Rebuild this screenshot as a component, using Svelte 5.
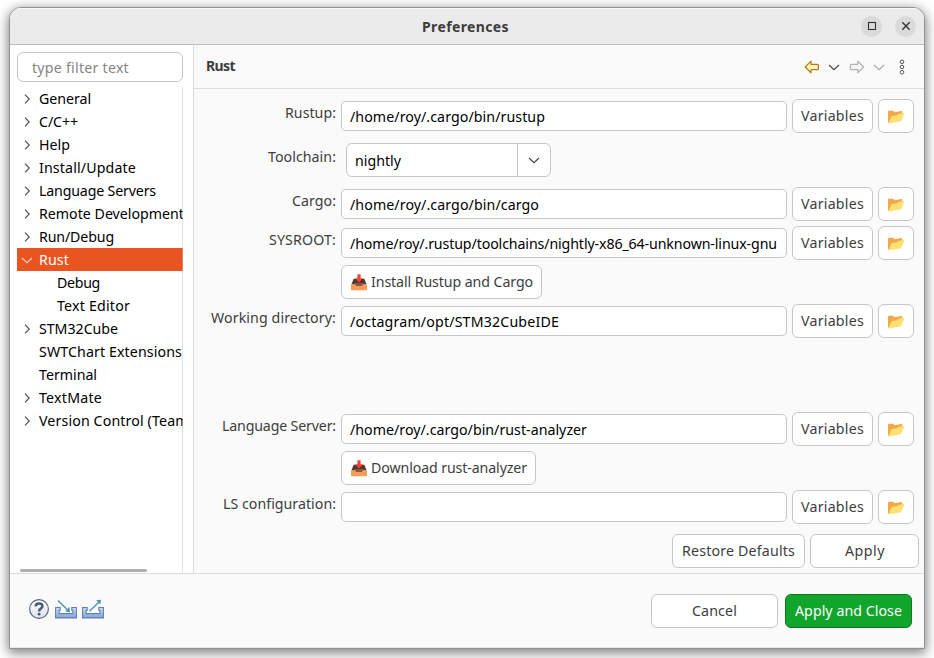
<script>
  const tree = [
    { name: 'General', w: 52, arrow: true },
    { name: 'C/C++', w: 39, arrow: true },
    { name: 'Help', w: 31, arrow: true },
    { name: 'Install/Update', w: 97, arrow: true },
    { name: 'Language Servers', w: 117, arrow: true },
    { name: 'Remote Development', w: 145, arrow: true },
    { name: 'Run/Debug', w: 75, arrow: true },
    { name: 'Rust', w: 30, open: true },
    { name: 'Debug', w: 43, child: true },
    { name: 'Text Editor', w: 73, child: true },
    { name: 'STM32Cube', w: 79, arrow: true },
    { name: 'SWTChart Extensions', w: 143 },
    { name: 'Terminal', w: 58 },
    { name: 'TextMate', w: 63, arrow: true },
    { name: 'Version Control (Team)', w: 154, arrow: true }
  ];

  const rows = [
    { label: 'Rustup:', lw: 51, value: '/home/roy/.cargo/bin/rustup', vw: 195 },
    { label: 'Toolchain:', lw: 68, combo: 'nightly', vw: 46 },
    { label: 'Cargo:', lw: 44, value: '/home/roy/.cargo/bin/cargo', vw: 189 },
    { label: 'SYSROOT:', lw: 67, value: '/home/roy/.rustup/toolchains/nightly-x86_64-unknown-linux-gnu', vw: 427 },
    { action: 'Install Rustup and Cargo', aw: 162 },
    { label: 'Working directory:', lw: 125, value: '/octagram/opt/STM32CubeIDE', vw: 209, last: true },
    { label: 'Language Server:', lw: 114, value: '/home/roy/.cargo/bin/rust-analyzer', vw: 237 },
    { action: 'Download rust-analyzer', aw: 156 },
    { label: 'LS configuration:', lw: 113, value: '', vw: 0 }
  ];

  // Spreads the letters so that a label takes the given width.
  function fit(node, width) {
    const natural = node.getBoundingClientRect().width;
    const count = node.textContent.length;
    if (width && count) node.style.letterSpacing = `${(width - natural) / count}px`;
  }
</script>

{#snippet text(value, width)}<span class="text" use:fit={width}>{value}</span>{/snippet}

{#snippet chevron()}
  <svg width="12" height="7" viewBox="0 0 12 7" fill="none" stroke="currentColor" stroke-width="1.2"><path d="M1 1 L6 5.6 L11 1" /></svg>
{/snippet}

{#snippet folder()}
  <svg class="folder" width="18" height="16" viewBox="0 0 18 16">
    <path d="M1 14 V2.6 Q1 1.8 1.8 1.8 H6 Q6.8 1.8 7 2.6 L7.3 3.2 L14.4 1.9 Q15.2 1.8 15.2 2.6 V6 L4 12 Z" fill="#f3a848" />
    <path d="M1.2 14.5 L4.4 7.6 Q4.7 7 5.4 6.9 L10 6.3 L11.1 4.9 L16.8 4.1 Q17.6 4 17.3 4.8 L14.3 11.5 Q14 12.2 13.2 12.4 Z" fill="#ffe070" />
  </svg>
{/snippet}

{#snippet inbox()}
  <svg width="16" height="17" viewBox="0 0 16 17">
    <path d="M2.6 4.8 H13.4 L15.6 10.6 H.4 Z" fill="#55392e" />
    <path d="M3.6 9 H12.4 L11.4 12 H4.6 Z" fill="#8b573d" />
    <path d="M0 10.4 H3.6 L4.8 12 H11.2 L12.4 10.4 H16 V15.6 Q16 16.2 15.4 16.2 H.6 Q0 16.2 0 15.6 Z" fill="#f79b58" />
    <path d="M6.4 .2 H9.6 V4.2 H11.8 L8 8.4 L4.2 4.2 H6.4 Z" fill="#f44336" />
  </svg>
{/snippet}

<div class="desktop">
  <div class="dialog">
    <header class="titlebar">
      <span></span>
      <h1>{@render text('Preferences', 87)}</h1>
      <div class="controls">
        <button class="round" aria-label="Maximize"><svg width="10" height="10" viewBox="0 0 10 10"><rect x="1.5" y="1.5" width="7" height="7" fill="none" stroke="#333" stroke-width="1.1" /></svg></button>
        <button class="round" aria-label="Close"><svg width="10" height="10" viewBox="0 0 10 10"><path d="M1.3 1.3 L8.7 8.7 M8.7 1.3 L1.3 8.7" stroke="#333" stroke-width="1.4" /></svg></button>
      </div>
    </header>

    <div class="main">
      <aside>
        <div class="filter">{@render text('type filter text', 97)}</div>
        <div class="tree">
          {#each tree as item}
            <div class="item" class:selected={item.open} class:child={item.child}>
              <span class="twist">
                {#if item.open}
                  {@render chevron()}
                {:else if item.arrow}
                  <svg width="7" height="12" viewBox="0 0 7 12" fill="none" stroke="#555" stroke-width="1.2"><path d="M1 1.6 L5.2 6 L1 10.4" /></svg>
                {/if}
              </span>
              {@render text(item.name, item.w)}
            </div>
          {/each}
          <div class="scroll"></div>
        </div>
      </aside>

      <section>
        <div class="pagehead">
          <h2>{@render text('Rust', 29)}</h2>
          <div class="tools">
            <svg class="back" width="16" height="14" viewBox="0 0 16 14"><path d="M1.2 7 L7 1.2 V4.3 H13.4 Q14.4 4.3 14.4 5.3 V8.7 Q14.4 9.7 13.4 9.7 H7 V12.8 Z" fill="#fff3bd" stroke="#b87a0c" stroke-width="1.2" stroke-linejoin="round" /></svg>
            <span class="drop dark">{@render chevron()}</span>
            <svg class="forward" width="16" height="14" viewBox="0 0 16 14"><path d="M14.6 7 L8.8 1.2 V4.3 H2.4 Q1.4 4.3 1.4 5.3 V8.7 Q1.4 9.7 2.4 9.7 H8.8 V12.8 Z" fill="#f4f4f4" stroke="#b1b1b1" stroke-width="1.2" stroke-linejoin="round" /></svg>
            <span class="drop">{@render chevron()}</span>
            <svg class="dots" width="6" height="16" viewBox="0 0 6 16" fill="#fff" stroke="#555" stroke-width="1"><circle cx="3" cy="2.8" r="1.8" /><circle cx="3" cy="8" r="1.8" /><circle cx="3" cy="13.2" r="1.8" /></svg>
          </div>
        </div>

        <div class="form">
          {#each rows as row}
            <div class="row" class:comborow={row.combo} class:last={row.last}>
              <div class="label">{#if row.label}{@render text(row.label, row.lw)}{/if}</div>
              {#if row.action}
                <button class="btn action">{@render inbox()}{@render text(row.action, row.aw)}</button>
              {:else if row.combo}
                <div class="combo"><div class="current">{@render text(row.combo, row.vw)}</div><div class="toggle">{@render chevron()}</div></div>
              {:else}
                <div class="field">{@render text(row.value, row.vw)}</div>
                <button class="btn">{@render text('Variables', 63)}</button>
                <button class="btn" aria-label="Browse">{@render folder()}</button>
              {/if}
            </div>
          {/each}
        </div>

        <div class="pagebuttons">
          <button class="btn restore">{@render text('Restore Defaults', 113)}</button>
          <button class="btn apply">{@render text('Apply', 40)}</button>
        </div>
      </section>
    </div>

    <footer>
      <div class="footicons">
        <svg width="22" height="22" viewBox="0 0 22 22">
          <defs><linearGradient id="help" x2="0" y2="1"><stop stop-color="#fff" /><stop offset="1" stop-color="#dde1e7" /></linearGradient></defs>
          <circle cx="11" cy="11" r="9.4" fill="url(#help)" stroke="#53617d" stroke-width="1.1" />
          <path d="M7.7 8.4 Q7.8 5.6 11 5.6 Q14.4 5.6 14.4 8.2 Q14.4 9.7 12.7 10.7 Q11.1 11.6 11.1 13.4" fill="none" stroke="#46587c" stroke-width="2.5" />
          <circle cx="11.1" cy="16.2" r="1.4" fill="#46587c" />
        </svg>
        {#each ['in', 'out'] as kind}
          <svg width="22" height="20" viewBox="0 0 22 20">
            <defs><linearGradient id={kind} x2="0" y2="1"><stop stop-color="#d4e0f0" /><stop offset="1" stop-color="#86a3d3" /></linearGradient></defs>
            <path d="M.6 8.5 H5.2 V11.2 H4.1 V14.6 H17.9 V11.2 H16.8 V8.5 H21.4 V18.9 H.6 Z" fill="url(#{kind})" stroke="#5f7fb5" stroke-width="1.1" />
            {#if kind === 'in'}
              <path d="M3 1.6 L13.2 11.4" stroke="#4b91ba" stroke-width="1.4" />
              <path d="M15 13.3 L10.2 12.2 L14.4 8 Z" fill="#4b91ba" />
            {:else}
              <path d="M7.5 12.2 L17 3" stroke="#4b91ba" stroke-width="1.4" />
              <path d="M19 .8 L14.2 1.3 L18.4 5.6 Z" fill="#4b91ba" />
            {/if}
          </svg>
        {/each}
      </div>
      <div class="footbuttons">
        <button class="btn">{@render text('Cancel', 45)}</button>
        <button class="btn primary">{@render text('Apply and Close', 107)}</button>
      </div>
    </footer>
  </div>
</div>

<style>
  :global(body) {
    background: #fff;
    overflow: hidden;
  }
  * {
    box-sizing: border-box;
  }
  .desktop {
    width: 934px;
    height: 658px;
    padding: 7px 9px 9px;
    overflow: hidden;
    font: 14.2px/22px 'Noto Sans', 'Open Sans', sans-serif;
    color: #3d3d3d;
  }
  .dialog {
    width: 916px;
    height: 642px;
    display: flex;
    flex-direction: column;
    border: 1px solid #929292;
    border-radius: 12px 12px 0 0;
    background: #fafafa;
    overflow: hidden;
    box-shadow: 0 3px 12px 1px rgba(0, 0, 0, 0.5);
  }
  .text {
    display: inline-block;
    white-space: pre;
    flex: none;
  }
  .titlebar {
    flex: none;
    height: 37px;
    display: grid;
    grid-template-columns: 1fr auto 1fr;
    align-items: center;
    background: #ebebeb;
    border-bottom: 1px solid #bdbdbd;
    box-shadow: inset 0 1px #f8f8f8;
  }
  h1,
  h2 {
    margin: 0;
    font-size: 14px;
    font-weight: 700;
  }
  h1 {
    line-height: 22px;
    padding: 1px 3px 0 0;
  }
  .controls {
    display: flex;
    justify-content: flex-end;
    gap: 13px;
    padding-right: 8px;
  }
  .round {
    width: 21px;
    height: 21px;
    padding: 0;
    border: 0;
    border-radius: 50%;
    background: #dadada;
    display: grid;
    place-items: center;
  }
  .main {
    flex: none;
    height: 529px;
    display: flex;
    border-bottom: 1px solid #dcdcdc;
  }
  aside {
    width: 184px;
    padding: 7px 10px 0 7px;
    background: #fff;
    border-right: 1px solid #dcdcdc;
    display: flex;
    flex-direction: column;
  }
  .filter {
    height: 30px;
    padding-left: 14px;
    border: 1px solid #c6c6c6;
    border-radius: 6px;
    color: #858585;
    line-height: 29px;
  }
  .tree {
    flex: 1;
    margin-top: 5px;
    width: 166px;
    position: relative;
    overflow: hidden;
    color: #000;
  }
  .tree::after {
    content: '';
    position: absolute;
    top: 0;
    right: 0;
    bottom: 0;
    width: 1px;
    background: rgba(190, 190, 190, 0.45);
  }
  .item {
    width: 166px;
    height: 23px;
    display: flex;
    align-items: center;
  }
  .twist {
    flex: none;
    width: 22px;
    padding-left: 7px;
    display: flex;
    align-items: center;
  }
  .child .twist {
    width: 40px;
  }
  .selected {
    background: #e95420;
    color: #fff;
  }
  .selected .twist {
    padding: 1px 0 0 4px;
    color: #f9d3c4;
  }
  .scroll {
    position: absolute;
    left: 3px;
    bottom: 1px;
    width: 127px;
    height: 3px;
    border-radius: 2px;
    background: #afafaf;
  }
  section {
    flex: 1;
    display: flex;
    flex-direction: column;
  }
  .pagehead {
    height: 44px;
    padding: 0 19px 0 12px;
    display: flex;
    align-items: center;
    justify-content: space-between;
    border-bottom: 1px solid #dcdcdc;
  }
  h2 {
    padding-bottom: 2px;
  }
  .tools {
    display: flex;
    align-items: center;
    margin-top: 1px;
  }
  .drop {
    display: flex;
    color: #aaa;
    margin-left: 8px;
  }
  .dark {
    color: #444;
  }
  .forward {
    margin-left: 9px;
  }
  .dots {
    margin-left: 14px;
  }
  .form {
    margin-top: 10px;
    display: flex;
    flex-direction: column;
    gap: 5px;
  }
  .row {
    height: 34px;
    display: grid;
    grid-template-columns: 142px 446px 81px 36px;
    column-gap: 5px;
    align-items: center;
  }
  .comborow {
    margin: 5px 0;
  }
  .last {
    margin-bottom: 69px;
  }
  .label {
    height: 34px;
    line-height: 28px;
    text-align: right;
  }
  .field {
    height: 30px;
    padding-left: 8px;
    border: 1px solid #c6c6c6;
    border-radius: 5px;
    background: #fff;
    color: #000;
    line-height: 29px;
    overflow: hidden;
  }
  .combo {
    width: 205px;
    height: 34px;
    margin-left: 5px;
    display: flex;
    border: 1px solid #c6c6c6;
    border-radius: 6px;
    background: #fff;
    color: #000;
  }
  .current {
    width: 171px;
    padding-left: 8px;
    line-height: 33px;
    border-right: 1px solid #c6c6c6;
  }
  .toggle {
    flex: 1;
    display: grid;
    place-items: center;
    color: #444;
  }
  .btn {
    height: 34px;
    padding: 0;
    display: flex;
    align-items: center;
    justify-content: center;
    border: 1px solid #c6c6c6;
    border-radius: 6px;
    background: #fff;
    color: #3d3d3d;
    font: inherit;
  }
  .folder {
    margin-top: 1px;
  }
  .action {
    justify-self: start;
    gap: 4px;
    padding: 0 8px 0 9px;
  }
  .pagebuttons {
    display: flex;
    justify-content: flex-end;
    gap: 5px;
    margin-top: 10px;
    padding-right: 5px;
  }
  .restore {
    width: 133px;
  }
  .apply {
    width: 109px;
    padding-left: 1px;
  }
  footer {
    flex: 1;
    display: flex;
    align-items: center;
    justify-content: space-between;
    padding: 0 12px 0 18px;
    box-shadow: inset 0 -1px #e6e6e6;
  }
  .footicons {
    display: flex;
    align-items: center;
    gap: 5px;
    padding-bottom: 4px;
  }
  .footbuttons {
    display: flex;
    gap: 7px;
  }
  .footbuttons .btn {
    width: 127px;
  }
  .footbuttons .primary {
    background: #12a52c;
    border-color: #0b7a1e;
    color: #fff;
  }
</style>
